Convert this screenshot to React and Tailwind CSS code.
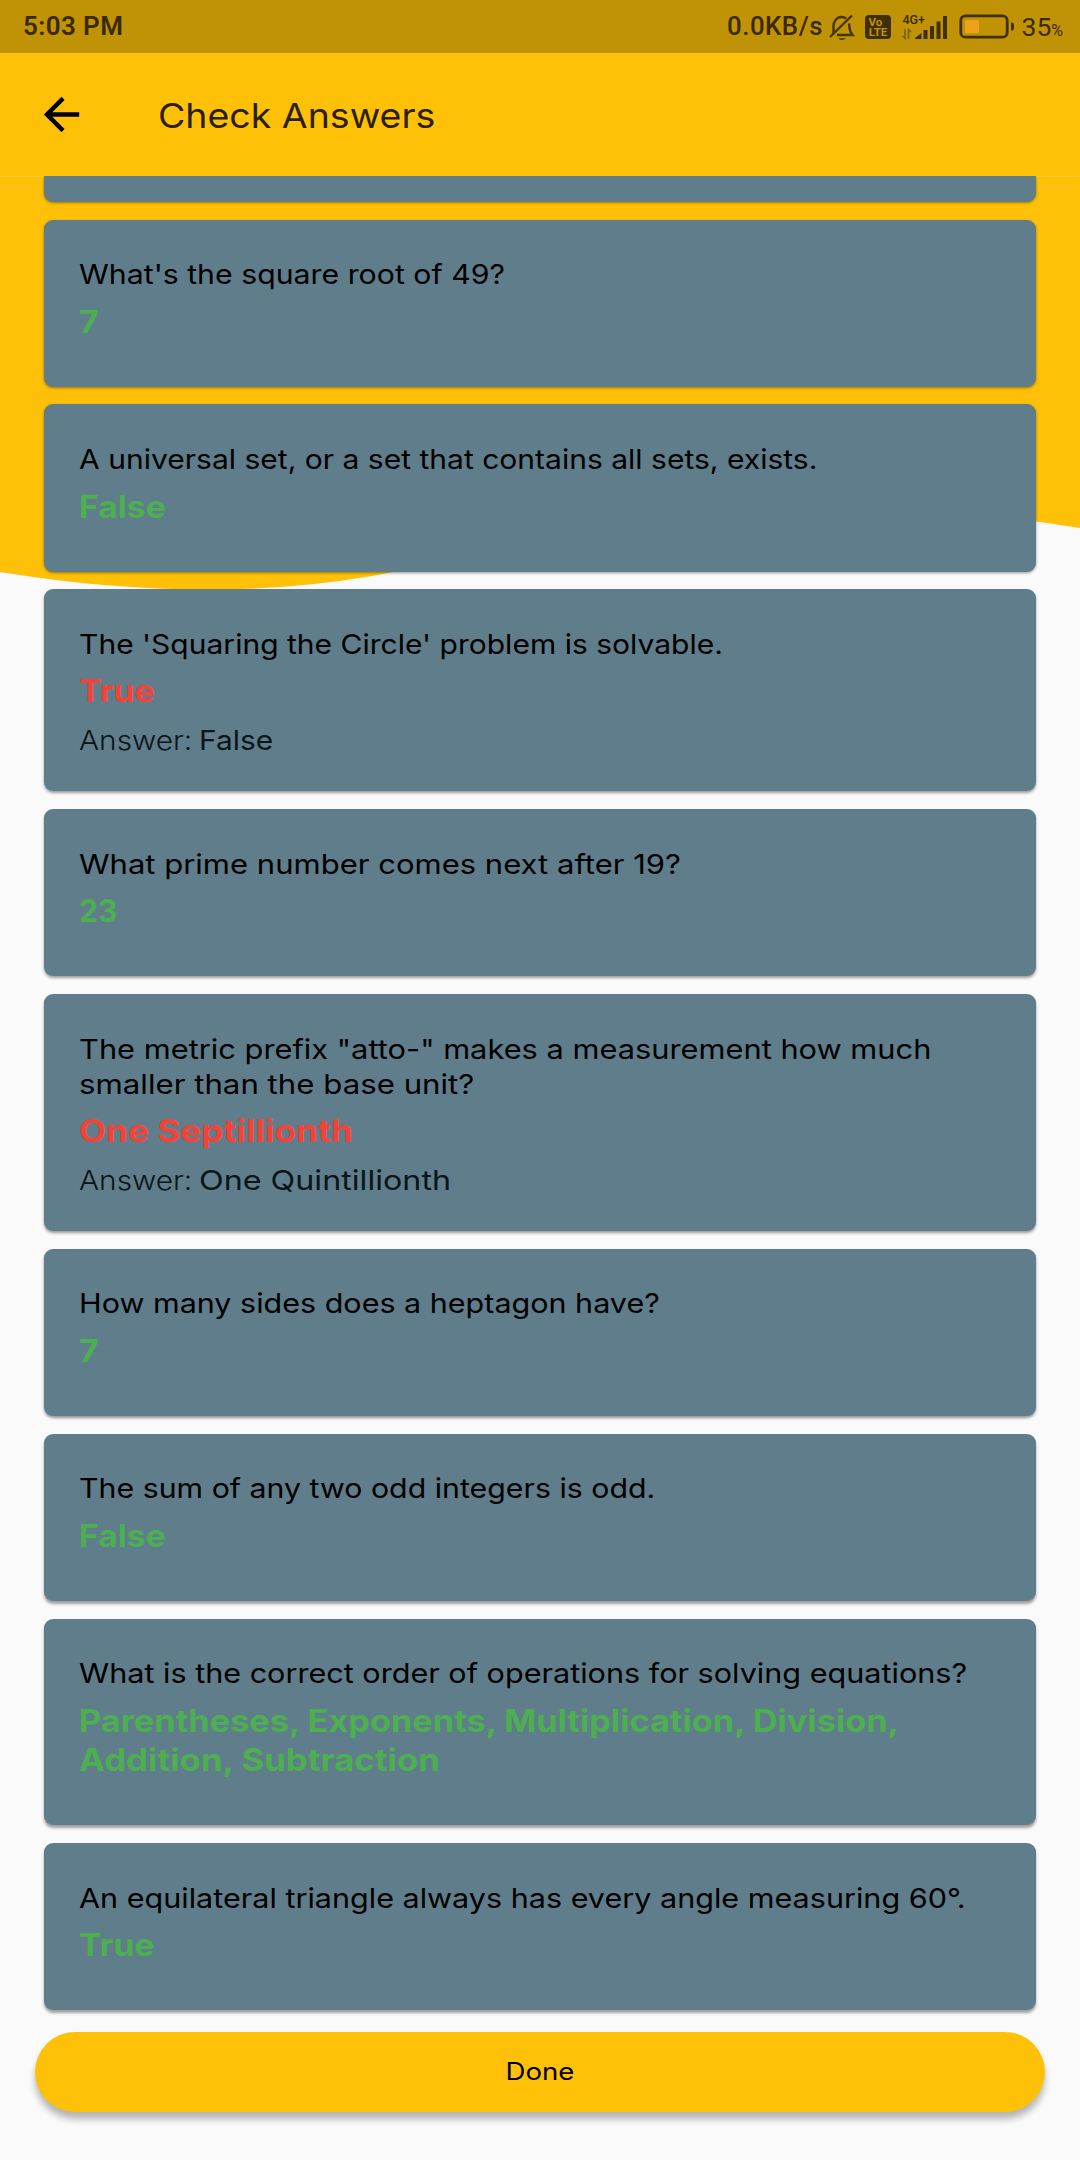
const CARDS = [
  {
    question: [{ text: "What's the square root of 49?", stretch: "scale-x-[1.101]" }],
    given: [{ text: "7", stretch: "scale-x-[1.1]" }],
    correct: true,
    shadow: "shadow-[0_1px_3px_rgba(0,0,0,0.4)]",
  },
  {
    question: [{ text: "A universal set, or a set that contains all sets, exists.", stretch: "scale-x-[1.092]" }],
    given: [{ text: "False", stretch: "scale-x-[1.085]" }],
    correct: true,
    shadow: "shadow-[0_1px_3px_rgba(0,0,0,0.4)]",
  },
  {
    question: [{ text: "The 'Squaring the Circle' problem is solvable.", stretch: "scale-x-[1.092]" }],
    given: [{ text: "True", stretch: "scale-x-[1.09]" }],
    correct: false,
    answer: { text: "False", stretch: "scale-x-[1.087]" },
    shadow: "shadow-[0_2px_3px_rgba(0,0,0,0.38)]",
  },
  {
    question: [{ text: "What prime number comes next after 19?", stretch: "scale-x-[1.128]" }],
    given: [{ text: "23", stretch: "scale-x-[0.97]" }],
    correct: true,
    shadow: "shadow-[0_2px_3px_rgba(0,0,0,0.38)]",
  },
  {
    question: [
      { text: 'The metric prefix "atto-" makes a measurement how much', stretch: "scale-x-[1.12]" },
      { text: "smaller than the base unit?", stretch: "scale-x-[1.135]" },
    ],
    given: [{ text: "One Septillionth", stretch: "scale-x-[1.135]" }],
    correct: false,
    answer: { text: "One Quintillionth", stretch: "scale-x-[1.173]" },
    shadow: "shadow-[0_2px_3px_rgba(0,0,0,0.4)]",
  },
  {
    question: [{ text: "How many sides does a heptagon have?", stretch: "scale-x-[1.109]" }],
    given: [{ text: "7", stretch: "scale-x-[1.1]" }],
    correct: true,
    shadow: "shadow-[0_2px_3px_rgba(0,0,0,0.42)]",
  },
  {
    question: [{ text: "The sum of any two odd integers is odd.", stretch: "scale-x-[1.102]" }],
    given: [{ text: "False", stretch: "scale-x-[1.085]" }],
    correct: true,
    shadow: "shadow-[0_3px_3px_rgba(0,0,0,0.36)]",
  },
  {
    question: [
      { text: "What is the correct order of operations for solving equations?", stretch: "scale-x-[1.112]" },
    ],
    given: [
      { text: "Parentheses, Exponents, Multiplication, Division,", stretch: "scale-x-[1.107]" },
      { text: "Addition, Subtraction", stretch: "scale-x-[1.122]" },
    ],
    correct: true,
    shadow: "shadow-[0_3px_3px_rgba(0,0,0,0.36)]",
  },
  {
    question: [
      { text: "An equilateral triangle always has every angle measuring 60°.", stretch: "scale-x-[1.111]" },
    ],
    given: [{ text: "True", stretch: "scale-x-[1.09]" }],
    correct: true,
    shadow: "shadow-[0_3px_3px_rgba(0,0,0,0.36)]",
  },
];

function Lines({ lines }) {
  return lines.map((line) => (
    <span key={line.text} className={`block w-fit origin-left whitespace-nowrap ${line.stretch}`}>
      {line.text}
    </span>
  ));
}

function AnswerCard({ card }) {
  return (
    <li
      className={`rounded-[9px] bg-[#607d8b] pl-[35px] pt-[37.7px] ${card.answer ? "pb-[32.7px]" : "pb-[45.5px]"} ${card.shadow}`}
    >
      <p className="text-[27.5px] leading-[35.2px] text-black">
        <Lines lines={card.question} />
      </p>
      <p
        className={`mt-[9.2px] text-[31px] font-bold leading-[39.6px] ${card.correct ? "text-[#4caf50]" : "text-[#f44336]"}`}
      >
        <Lines lines={card.given} />
      </p>
      {card.answer && (
        <p className="mt-[12.3px] flex whitespace-nowrap text-[27.5px] leading-[35.2px] text-[#0a1519]">
          <span className="w-[120px]">
            <span className="block w-fit origin-left scale-x-[1.085] font-light">Answer:</span>
          </span>
          <span className={`origin-left ${card.answer.stretch}`}>{card.answer.text}</span>
        </p>
      )}
    </li>
  );
}

function BellOffIcon() {
  return (
    <svg className="ml-[5px] h-[28px] w-[27px]" viewBox="0 0 27 28" fill="none" stroke="#463400" strokeWidth="2.4">
      <path d="M5.5 20.5V13.5C5.5 8.5 8.5 4 13.5 4C15.5 4 17 4.6 18.3 5.7" />
      <path d="M21 10.5C21.6 14 21 18 24.5 22H9" />
      <path d="M2 24L24 2.5" />
      <path d="M10.5 25.2H17.5C16.5 27.5 11.5 27.5 10.5 25.2Z" fill="#463400" stroke="none" />
    </svg>
  );
}

function VolteIcon() {
  return (
    <div className="ml-[10px] flex h-[24px] w-[26px] flex-col items-center justify-center rounded-[4px] bg-[#402f00] font-[Roboto] text-[11.5px] font-bold leading-[10px] text-[#bf9305]">
      <span className="-ml-[5px]">Vo</span>
      <span>LTE</span>
    </div>
  );
}

function SignalIcon() {
  return (
    <div className="ml-[11.5px] flex h-[26px] w-[46px] justify-between">
      <div className="relative flex w-[12px] flex-col justify-between">
        <span className="whitespace-nowrap font-[Roboto] text-[12.5px] font-medium leading-[12px] text-[#3a2a00]">4G+</span>
        <svg className="h-[12px] w-[10px]" viewBox="0 0 10 12" fill="none" stroke="#7d6003" strokeWidth="1.6">
          <path d="M3 1V10.5L0.6 8" />
          <path d="M6.5 11V1.5L9 4" />
        </svg>
      </div>
      <svg className="h-[26px] w-[33px]" viewBox="0 0 33 26" fill="#402f00">
        <path d="M0 25V24L6.5 19V25Z" />
        <rect x="8.5" y="16" width="4" height="9" />
        <rect x="15" y="12" width="4" height="13" />
        <rect x="21.5" y="7.5" width="4" height="17.5" />
        <rect x="28" y="2" width="4" height="23" />
      </svg>
    </div>
  );
}

function BatteryIcon() {
  return (
    <svg className="ml-[11px] h-[25px] w-[56px]" viewBox="0 0 56 25">
      <rect x="1.8" y="1.8" width="46.4" height="21.4" rx="4.5" fill="none" stroke="#402f00" strokeWidth="2.8" />
      <rect x="6" y="6" width="14" height="13" rx="1.5" fill="#eca21c" />
      <path d="M52 8.5H53Q55 8.5 55 11V14Q55 16.5 53 16.5H52Z" fill="#402f00" />
    </svg>
  );
}

function StatusBar() {
  return (
    <div className="flex h-[53px] items-center justify-between bg-[#bf9305] pl-[23px] pr-[17px] font-[Roboto] text-[#3a2a00]">
      <span className="text-[26px] font-semibold leading-[53px] tracking-[0.4px]">5:03 PM</span>
      <div className="flex items-center">
        <span className="text-[25.8px] font-medium tracking-[0.5px]">0.0KB/s</span>
        <BellOffIcon />
        <VolteIcon />
        <SignalIcon />
        <BatteryIcon />
        <span className="ml-[6px] flex items-baseline">
          <span className="text-[26.5px]">35</span>
          <span className="text-[16px]">%</span>
        </span>
      </div>
    </div>
  );
}

function AppBar() {
  return (
    <header className="flex h-[123px] items-center bg-[#ffc107] pl-[35px]">
      <svg className="h-[53px] w-[53px]" viewBox="0 0 24 24" fill="#000">
        <path d="M20 11H7.83l5.59-5.59L12 4l-8 8 8 8 1.41-1.41L7.83 13H20v-2z" />
      </svg>
      <h1 className="ml-[70px] mt-[3px] origin-left scale-x-[1.102] text-[34px] leading-[44px] text-[#2b1f00]">
        Check Answers
      </h1>
    </header>
  );
}

function WaveBackdrop() {
  return (
    <svg className="absolute left-0 top-0 -z-10 h-[441px] w-full" viewBox="0 176 1080 441" fill="#ffc107">
      <path d="M0 176V572Q270 616 480 550Q747.7 474 1080 528V176Z" />
    </svg>
  );
}

export default function App() {
  return (
    <div className="flex h-[2160px] w-[1080px] flex-col overflow-hidden bg-[#fafafa] font-[Inter,sans-serif]">
      <StatusBar />
      <AppBar />
      <main className="relative isolate flex-1">
        <WaveBackdrop />
        <div className="h-px w-full bg-[#ffca2f]" />
        <div className="-mt-px overflow-hidden px-[44px] pb-[22px]">
          <div className="h-[26px] rounded-b-[9px] bg-[#607d8b] shadow-[0_1px_3px_rgba(0,0,0,0.4)]" />
          <ul className="mt-[17.5px] flex flex-col gap-[17.75px]">
            {CARDS.map((card) => (
              <AnswerCard key={card.question[0].text} card={card} />
            ))}
          </ul>
        </div>
        <div className="px-[35px]">
          <button className="h-[80px] w-full rounded-full bg-[#ffc107] text-[24px] text-black shadow-[0_7px_7px_rgba(0,0,0,0.28)]">
            <span className="inline-block scale-x-[1.15]">Done</span>
          </button>
        </div>
      </main>
    </div>
  );
}
